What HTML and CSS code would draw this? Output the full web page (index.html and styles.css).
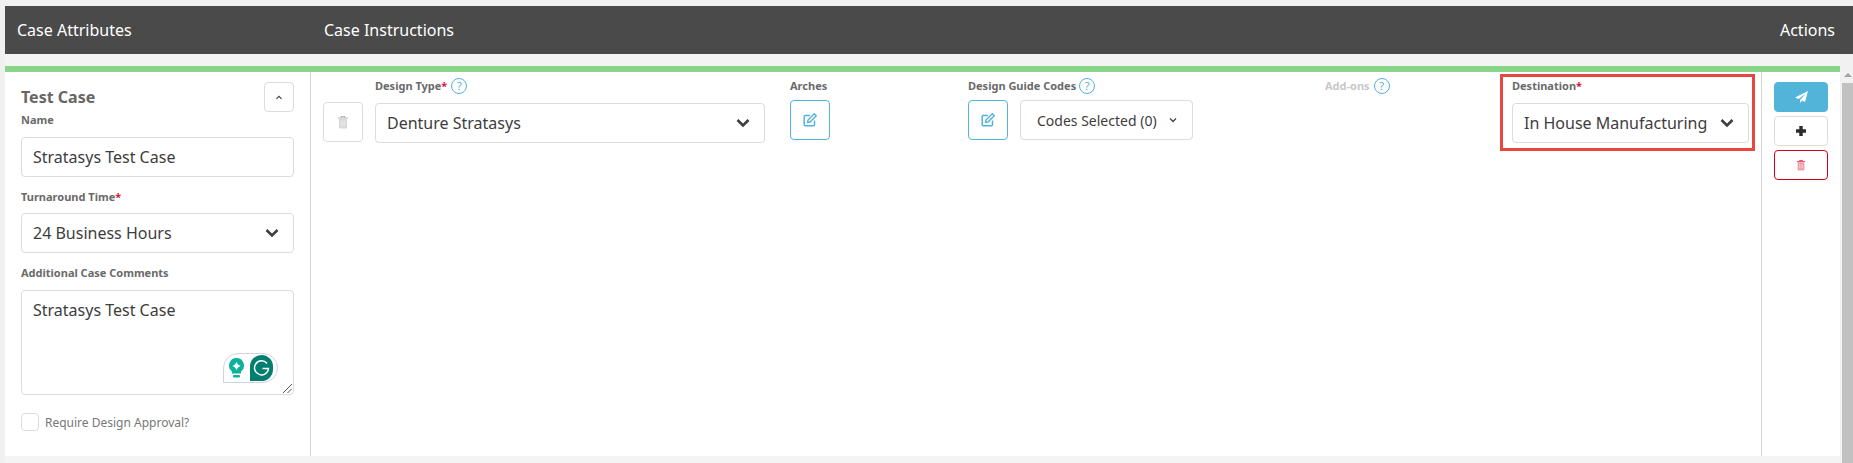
FILE: index.html
```html
<!DOCTYPE html>
<html lang="en">
<head>
<meta charset="utf-8">
<title>Case</title>
<link rel="stylesheet" href="styles.css">
</head>
<body>
<svg class="defs" width="0" height="0" aria-hidden="true">
  <symbol id="chev" viewBox="0 0 14 10"><path d="M1.5 2 7 7.5 12.5 2" fill="none" stroke="currentColor" stroke-width="2.6"/></symbol>
  <symbol id="edit" viewBox="0 0 14 14"><path d="M7 2.500H2.200a1 1 0 0 0-1 1v8.300a1 1 0 0 0 1 1h8.300a1 1 0 0 0 1-1V7.500" fill="none" stroke="currentColor" stroke-width="1.500"/><path d="M11.200.8 13.200 2.800 7 9 4.600 9.400 5 7Z" fill="none" stroke="currentColor" stroke-width="1.400"/></symbol>
  <symbol id="trash" viewBox="0 0 12 14"><path d="M1 3h10M4.300 3V1.500h3.400V3" fill="none" stroke="currentColor" stroke-width="1.200"/><path d="M2 4h8v8.500a1 1 0 0 1-1 1H3a1 1 0 0 1-1-1Z" fill="currentColor" fill-opacity=".55"/><path d="M4.300 5.500v6M6 5.500v6M7.700 5.500v6" stroke="#fff" stroke-opacity=".7" stroke-width=".7"/></symbol>
</svg>
<div class="top-gap"></div>
<header class="head">
  <div class="h-attr">Case Attributes</div>
  <div class="h-inst">Case Instructions</div>
  <div class="h-act">Actions</div>
</header>
<div class="scroll-area">
  <main class="content">
    <div class="stripe"></div>
    <div class="row">
      <aside class="attrs">
        <div class="title-row">
          <h2 class="case-title">Test Case</h2>
          <button class="btn collapse"><svg width="8" height="5" viewBox="0 0 8 5"><path d="M1.500 3.800 4 1.300l2.500 2.500" fill="none" stroke="#444" stroke-width="1.200"/></svg></button>
        </div>
        <label class="lbl name-lbl">Name</label>
        <div class="field">Stratasys Test Case</div>
        <label class="lbl gap-lbl">Turnaround Time<span class="req">*</span></label>
        <div class="field select"><span>24 Business Hours</span><svg class="chev"><use href="#chev"/></svg></div>
        <label class="lbl gap-lbl">Additional Case Comments</label>
        <div class="field area">
          <span>Stratasys Test Case</span>
          <div class="gram">
            <svg width="17" height="22" viewBox="0 0 17 22"><path d="M8.500 1a7.500 7.500 0 0 0-4.500 13.500V16.500h9V14.500A7.500 7.500 0 0 0 8.500 1Z" fill="#0bb39c"/><path d="M8.500 5 10 7.500 12.500 9 10 10.500 8.500 13 7 10.500 4.500 9 7 7.500Z" fill="#fff"/><rect x="5" y="18" width="7" height="2.500" rx="1" fill="#0bb39c"/></svg>
            <svg width="23" height="26" viewBox="0 0 23 26"><path d="M11.500 0a11.500 11.500 0 0 1 11.500 11.500v3A11.500 11.500 0 0 1 11.500 26H0V11.500A11.500 11.500 0 0 1 11.500 0Z" fill="#027e6f"/><path d="M17 8.500A7 7 0 1 0 18.500 13.500h-6" fill="none" stroke="#fff" stroke-width="1.500"/></svg>
          </div>
          <svg class="grip" width="9" height="9" viewBox="0 0 9 9"><path d="M0 9 9 0M4.500 9 9 4.500" stroke="#555" stroke-width="1"/></svg>
        </div>
        <div class="check-row"><span class="check"></span><span class="check-lbl">Require Design Approval?</span></div>
      </aside>
      <section class="instr">
        <button class="btn square trash-btn"><svg width="12" height="14"><use href="#trash"/></svg></button>
        <div class="col c-type">
          <div class="c-lbl wide"><span class="lbl">Design Type<span class="req">*</span></span><span class="help">?</span></div>
          <div class="field select"><span>Denture Stratasys</span><svg class="chev"><use href="#chev"/></svg></div>
        </div>
        <div class="col c-arch">
          <div class="c-lbl tight"><span class="lbl">Arches</span></div>
          <button class="btn square blue"><svg width="14" height="14"><use href="#edit"/></svg></button>
        </div>
        <div class="col c-guide">
          <div class="c-lbl tight"><span class="lbl">Design Guide Codes</span><span class="help">?</span></div>
          <div class="guide-row">
            <button class="btn square blue"><svg width="14" height="14"><use href="#edit"/></svg></button>
            <div class="codes"><span>Codes Selected (0)</span><svg width="8" height="6" viewBox="0 0 8 6"><path d="M1 1.500 4 4.500l3-3" fill="none" stroke="#444" stroke-width="1.300"/></svg></div>
          </div>
        </div>
        <div class="col c-add">
          <div class="c-lbl wide"><span class="lbl muted">Add-ons</span><span class="help">?</span></div>
        </div>
        <div class="col c-dest">
          <div class="c-lbl"><span class="lbl">Destination<span class="req">*</span></span></div>
          <div class="field select"><span>In House Manufacturing</span><svg class="chev"><use href="#chev"/></svg></div>
        </div>
      </section>
      <aside class="actions">
        <button class="btn act send"><svg width="13" height="12" viewBox="0 0 13 12"><path d="M13 0 0 6.500l3.500 1.500L11 2.500 5 9v3l2-2.500 3 1.500Z" fill="#fff"/></svg></button>
        <button class="btn act plus"><svg width="12" height="12" viewBox="0 0 12 12"><path d="M6 1v10M1 6h10" stroke="#2b2b2b" stroke-width="3.400"/></svg></button>
        <button class="btn act del"><svg width="10" height="12" viewBox="0 0 12 14"><use href="#trash"/></svg></button>
      </aside>
    </div>
  </main>
  <div class="scrollbar"><span class="arrow"></span><span class="thumb"></span></div>
</div>
</body>
</html>
```
FILE: styles.css
```css
* { box-sizing: border-box; }
html, body { margin: 0; height: 100%; overflow: hidden; }
body { background: #f0f0f0; font-family: "Noto Sans", sans-serif; color: #3d3d3d; }
.defs { position: absolute; }
.top-gap { height: 6px; }
.head { height: 48px; margin-left: 5px; background: #4a4a4a; color: #fff; display: flex; align-items: center; font-size: 16px; }
.h-attr { width: 319px; padding-left: 12px; }
.h-inst { flex: 1; }
.h-act { padding-right: 18px; }
.scroll-area { display: flex; height: 409px; margin-left: 5px; }
.content { flex: 1; padding-top: 12px; background: #f4f4f4; display: flex; flex-direction: column; }
.stripe { height: 6px; background: #88d58a; flex: none; }
.row { height: 384px; flex: none; background: #fff; display: flex; }
.attrs { width: 306px; border-right: 1px solid #d4d4d4; padding: 10px 16px 0 16px; flex: none; }
.title-row { display: flex; justify-content: space-between; align-items: center; height: 30px; }
.case-title { margin: 0; font-size: 16px; font-weight: 700; color: #666; }
.btn { background: #fff; border: 1px solid #dcdcdc; border-radius: 4px; padding: 0; display: flex; align-items: center; justify-content: center; }
.collapse { width: 30px; height: 30px; }
.lbl { font-size: 11px; font-weight: 700; color: #6a6a6a; line-height: 14px; display: block; }
.req { color: #e0103a; }
.name-lbl { margin: 1px 0 10px; }
.gap-lbl { margin-top: 13px; }
.field { height: 40px; border: 1px solid #dcdcdc; border-radius: 4px; padding: 0 11px; font-size: 16px; display: flex; align-items: center; color: #3d3d3d; background: #fff; }
.gap-lbl + .field { margin-top: 9px; }
.select { justify-content: space-between; }
.chev { width: 14px; height: 10px; margin-right: 3px; color: #3d3d3d; flex: none; }
.attrs .area { height: 105px; margin-top: 10px; align-items: flex-start; padding-top: 8px; position: relative; }
.gram { position: absolute; right: 15px; bottom: 11px; width: 55px; height: 30px; border: 1px solid #cfd3e0; border-radius: 15px 15px 15px 0; background: #fff; display: flex; align-items: center; justify-content: center; gap: 5px; }
.grip { position: absolute; right: 1px; bottom: 1px; }
.check-row { display: flex; align-items: center; gap: 6px; margin-top: 18px; }
.check { width: 18px; height: 18px; border: 1px solid #dcdcdc; border-radius: 4px; }
.check-lbl { font-size: 12px; color: #777; padding-top: 1px; }
.instr { flex: 1; display: flex; align-items: flex-start; padding: 30px 0 0 12px; }
.square { width: 40px; height: 40px; flex: none; }
.trash-btn { color: #b8b8b8; }
.col { margin-top: -30px; }
.c-lbl { display: flex; align-items: center; gap: 3px; height: 31px; padding-bottom: 3px; }
.c-lbl.wide { gap: 4px; }
.c-lbl.tight { height: 28px; padding-bottom: 0; }
.help { width: 16px; height: 16px; border: 1px solid #52b4d8; border-radius: 50%; color: #52b4d8; font-size: 11px; line-height: 14px; text-align: center; }
.c-type { width: 390px; margin-left: 12px; }
.c-arch { margin-left: 25px; width: 178px; }
.blue { border-color: #52b4d8; color: #52b4d8; }
.c-guide { width: 357px; }
.guide-row { display: flex; gap: 12px; }
.codes { width: 173px; height: 40px; border: 1px solid #dcdcdc; border-radius: 4px; display: flex; align-items: center; padding-left: 16px; gap: 12px; font-size: 14px; color: #3d3d3d; }
.muted { color: #c8c8c8; }
.c-add { width: 187px; }
.c-dest { width: 237px; position: relative; }
.c-dest::before { content: ""; box-sizing: border-box; position: absolute; left: -12px; top: 2px; width: 255px; height: 77px; border: 3px solid #e8473f; pointer-events: none; }
.actions { width: 79px; flex: none; border-left: 1px solid #d4d4d4; padding: 10px 0 0 12px; display: flex; flex-direction: column; gap: 4px; }
.act { width: 54px; height: 30px; }
.send { background: #52b4d8; border-color: #52b4d8; }
.del { border-color: #d0001a; color: #e8425f; }
.scrollbar { width: 13px; padding-left: 2px; background: #f1f1f1; flex: none; display: flex; flex-direction: column; align-items: center; }
.arrow { margin-top: 19px; width: 0; height: 0; border-left: 4px solid transparent; border-right: 4px solid transparent; border-bottom: 4px solid #a3a3a3; }
.thumb { display: block; width: 100%; margin-top: 6px; flex: 1; background: #c1c1c1; }
```
